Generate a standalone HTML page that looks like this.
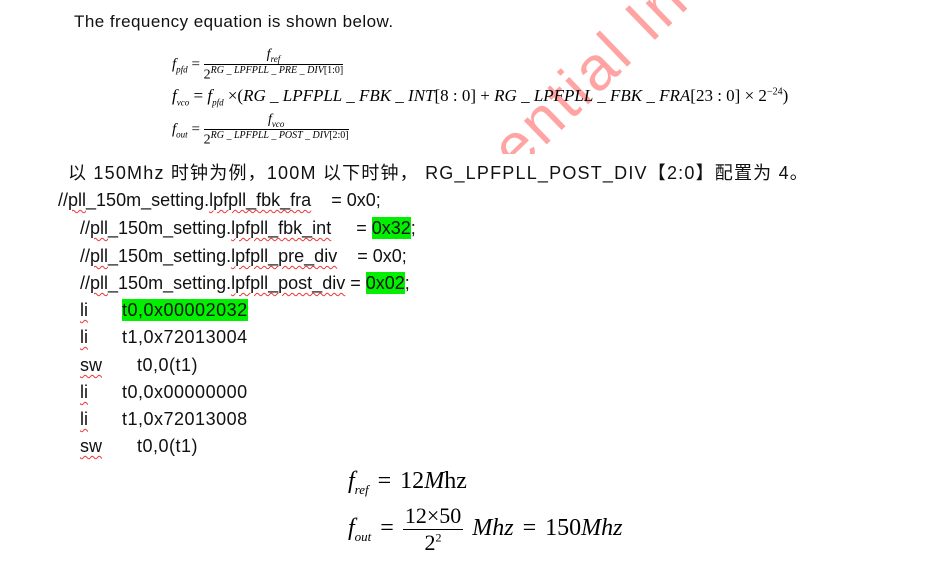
<!DOCTYPE html>
<html><head><meta charset="utf-8"><style>
body{margin:0;width:935px;height:571px;background:#fff;position:relative;overflow:hidden;font-family:"Liberation Sans","Noto Sans CJK SC",sans-serif;color:#111}
.a{position:absolute;white-space:nowrap}
.t{font-size:18px;line-height:22px}
.w{text-decoration:underline wavy #e33;text-decoration-thickness:1px;text-underline-offset:3px}
.g{background:#00f000;padding:1px 0}
.m{font-family:"Liberation Serif",serif;color:#000}
.i{font-style:italic}
.fr{display:inline-block;vertical-align:middle;text-align:center}
.fr .n{display:block;border-bottom:1px solid #000;padding:0 2px}
.fr .d{display:block}
.wm{position:absolute;left:0;top:0;width:935px;height:154px;overflow:hidden;pointer-events:none}
.wm div{position:absolute;left:525px;top:118px;transform-origin:0 100%;transform:rotate(-44deg);font-size:62px;line-height:64px;color:#ffa3a3;white-space:nowrap;font-family:"Liberation Sans",sans-serif;letter-spacing:3px}
</style></head><body>
<div class="wm"><div>ential Inf</div></div>

<div class="a" style="left:74px;top:12px;font-size:17px;line-height:20px;letter-spacing:0.45px">The frequency equation is shown below.</div>

<div class="a m" style="left:172px;top:47px;font-size:15px">
<span class="i">f</span><sub class="i" style="font-size:9px">pfd</sub> =
<span class="fr" style="font-size:14px"><span class="n i">f<sub style="font-size:9px">ref</sub></span><span class="d">2<sup class="i" style="font-size:10px">RG _ LPFPLL _ PRE _ DIV</sup><sup style="font-size:10px">[1:0]</sup></span></span>
</div>
<div class="a m" style="left:172px;top:86px;font-size:17px">
<span class="i">f</span><sub class="i" style="font-size:9px">vco</sub> = <span class="i">f</span><sub class="i" style="font-size:9px">pfd</sub> ×(<span class="i">RG _ LPFPLL _ FBK _ INT</span>[8 : 0] + <span class="i">RG _ LPFPLL _ FBK _ FRA</span>[23 : 0] × 2<sup style="font-size:10px">−24</sup>)
</div>
<div class="a m" style="left:172px;top:112px;font-size:15px">
<span class="i">f</span><sub class="i" style="font-size:9px">out</sub> =
<span class="fr" style="font-size:14px"><span class="n i">f<sub style="font-size:9px">vco</sub></span><span class="d">2<sup class="i" style="font-size:10px">RG _ LPFPLL _ POST _ DIV</sup><sup style="font-size:10px">[2:0]</sup></span></span>
</div>

<div class="a t" style="left:68px;top:162px;letter-spacing:1.2px">以 150Mhz 时钟为例，100M 以下时钟， RG_LPFPLL_POST_DIV【2:0】配置为 4。</div>

<div class="a t" style="left:58px;top:189px">//<span class="w">pll</span>_150m_setting.<span class="w">lpfpll_fbk_fra</span>&nbsp;&nbsp;&nbsp;&nbsp;= 0x0;</div>
<div class="a t" style="left:80px;top:217px">//<span class="w">pll</span>_150m_setting.<span class="w">lpfpll_fbk_int</span>&nbsp;&nbsp;&nbsp;&nbsp;&nbsp;= <span class="g">0x32</span>;</div>
<div class="a t" style="left:80px;top:245px">//<span class="w">pll</span>_150m_setting.<span class="w">lpfpll_pre_div</span>&nbsp;&nbsp;&nbsp;&nbsp;= 0x0;</div>
<div class="a t" style="left:80px;top:272px">//<span class="w">pll</span>_150m_setting.<span class="w">lpfpll_post_div</span> = <span class="g">0x02</span>;</div>

<div class="a t w" style="left:80px;top:299px">li</div><div class="a t" style="left:122px;top:299px;letter-spacing:0.5px"><span class="g">t0,0x00002032</span></div>
<div class="a t w" style="left:80px;top:326px">li</div><div class="a t" style="left:122px;top:326px;letter-spacing:0.5px">t1,0x72013004</div>
<div class="a t w" style="left:80px;top:354px">sw</div><div class="a t" style="left:137px;top:354px;letter-spacing:0.5px">t0,0(t1)</div>
<div class="a t w" style="left:80px;top:381px">li</div><div class="a t" style="left:122px;top:381px;letter-spacing:0.5px">t0,0x00000000</div>
<div class="a t w" style="left:80px;top:408px">li</div><div class="a t" style="left:122px;top:408px;letter-spacing:0.5px">t1,0x72013008</div>
<div class="a t w" style="left:80px;top:435px">sw</div><div class="a t" style="left:137px;top:435px;letter-spacing:0.5px">t0,0(t1)</div>

<div class="a m" style="left:348px;top:468px;font-size:24px;word-spacing:3px">
<span class="i">f</span><sub class="i" style="font-size:13px">ref</sub> = 12<span class="i">M</span>hz
</div>
<div class="a m" style="left:348px;top:503px;font-size:24px;word-spacing:3px">
<span class="i">f</span><sub class="i" style="font-size:13px">out</sub> =
<span class="fr" style="font-size:22px"><span class="n">12×50</span><span class="d">2<sup style="font-size:12px">2</sup></span></span>
<span class="i">Mhz</span> = 150<span class="i">Mhz</span>
</div>
</body></html>
